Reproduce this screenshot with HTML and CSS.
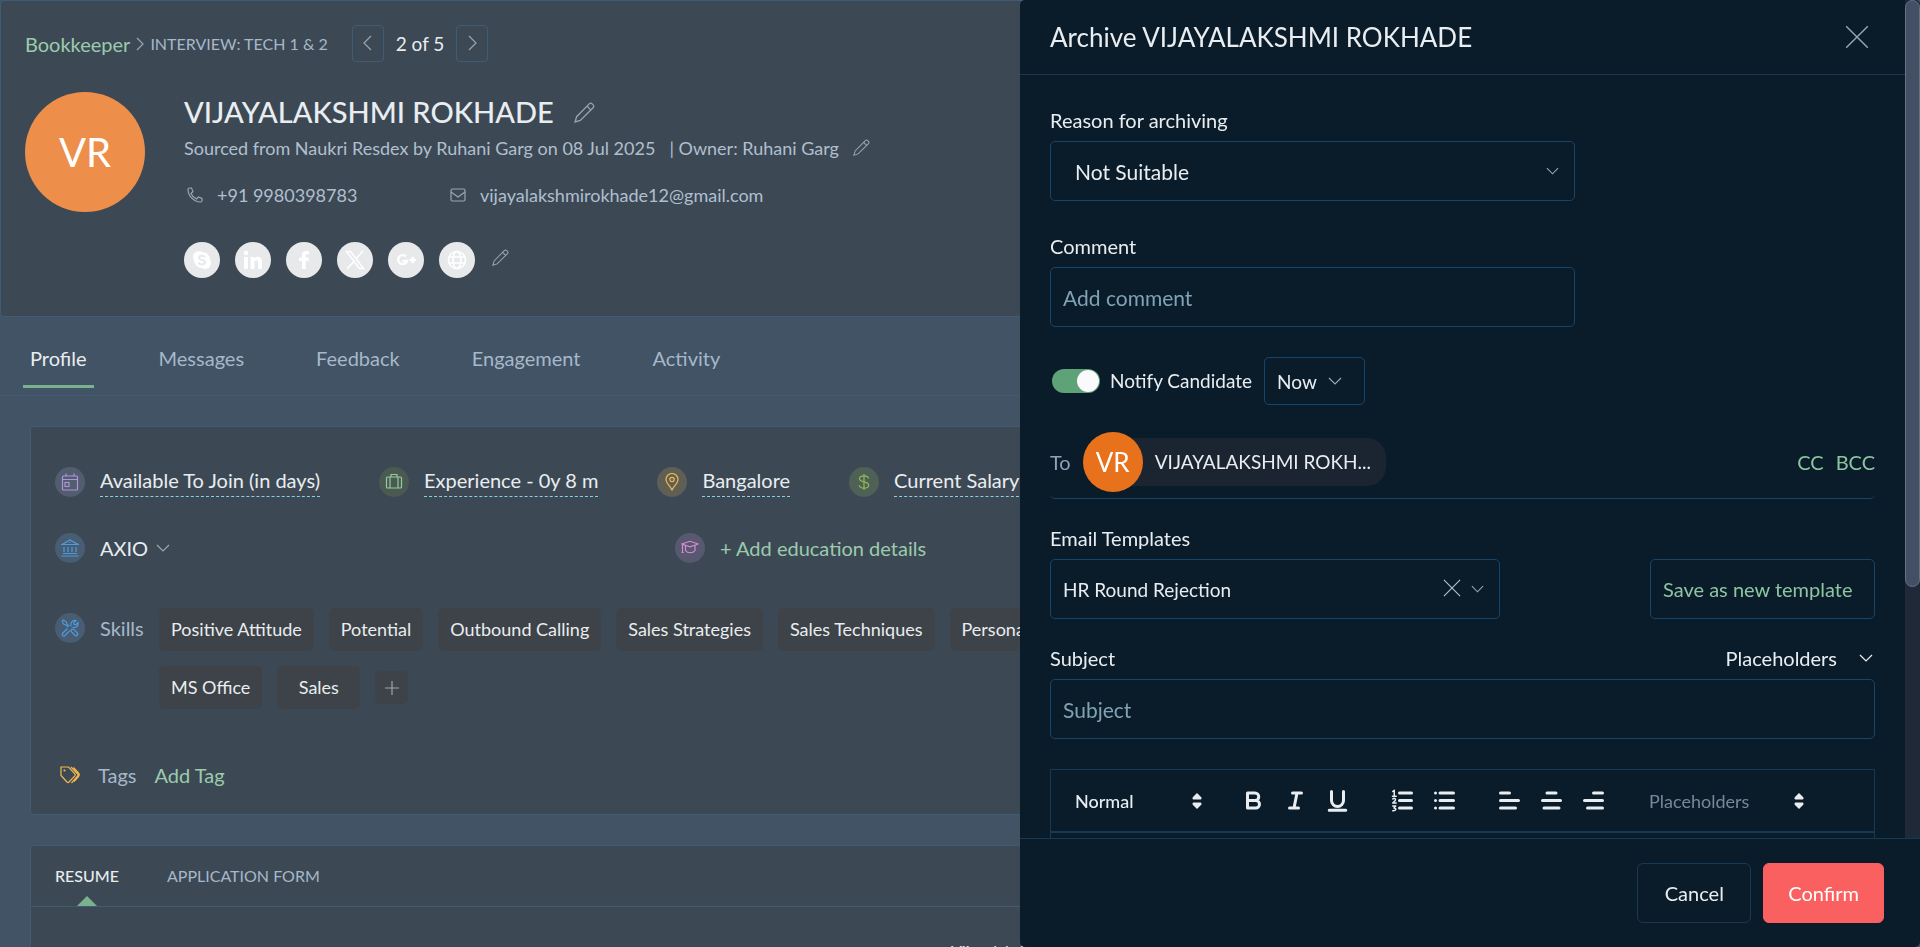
FILE: index.html
```html
<!DOCTYPE html>
<html lang="en">
<head>
  <meta charset="UTF-8">
  <meta name="viewport" content="width=device-width, initial-scale=1">
  <title>Archive candidate</title>
  <link rel="stylesheet" href="styles.css">
</head>
<body>

<!-- shared icons -->
<svg class="sprite" aria-hidden="true">
  <symbol id="pencil" viewBox="0 0 20 20">
    <path d="M1 19l1.500-5L14.500 1.800a2 2 0 0 1 2.800 0l.9.9a2 2 0 0 1 0 2.800L6 17.500zM12.500 4l3.500 3.500" />
  </symbol>
  <symbol id="down" viewBox="0 0 14 8">
    <path d="M1 1l6 6 6-6" />
  </symbol>
  <symbol id="cross" viewBox="0 0 20 20">
    <path d="M1 1l18 18M19 1L1 19" />
  </symbol>
  <symbol id="updown" viewBox="0 0 10 16">
    <path d="M5 0l4 4c1 1 .5 2.500-.5 2.500h-7C.5 6.500 0 5 1 4zM5 16l4-4c1-1 .5-2.500-.5-2.500h-7C.5 9.500 0 11 1 12z" />
  </symbol>
</svg>

<main class="page">
  <header class="candidate">
    <nav class="crumbs">
      <a href="#" class="job">Bookkeeper</a>
      <svg class="line crumb-arrow" viewBox="0 0 8 14"><path d="M1 1l6 6-6 6" /></svg>
      <span class="stage">INTERVIEW: TECH 1 &amp; 2</span>
      <button class="pager" aria-label="Previous"><svg class="line" viewBox="0 0 9 16"><path d="M8 1L1 8l7 7" /></svg></button>
      <span class="count">2 of 5</span>
      <button class="pager" aria-label="Next"><svg class="line" viewBox="0 0 9 16"><path d="M1 1l7 7-7 7" /></svg></button>
    </nav>

    <div class="person">
      <div class="avatar">VR</div>
      <div class="info">
        <h1>VIJAYALAKSHMI ROKHADE <button class="edit" aria-label="Edit name"><svg class="line pencil-lg"><use href="#pencil" /></svg></button></h1>
        <p class="source">
          <span>Sourced from Naukri Resdex by Ruhani Garg on 08 Jul 2025</span>
          <span>| Owner: Ruhani Garg</span>
          <button class="edit" aria-label="Edit owner"><svg class="line pencil"><use href="#pencil" /></svg></button>
        </p>
        <div class="contacts">
          <span class="contact phone">
            <svg class="line" viewBox="0 0 16 16"><path d="M1 2.500C1 9 7 15 13.500 15c1 0 1.500-.5 1.500-1.500v-2l-3.500-1.500-2 2C7 11 5 9 4 6.500l2-2L4.500 1h-2C1.500 1 1 1.500 1 2.500z" /></svg>
            +91 9980398783
          </span>
          <span class="contact">
            <svg class="line" viewBox="0 0 16 16"><rect x="1" y="2" width="14" height="12" rx="1.500" /><path d="M1 5l7 5 7-5" /></svg>
            vijayalakshmirokhade12@gmail.com
          </span>
        </div>
        <div class="socials">
          <a href="#" class="social" aria-label="Skype"><svg viewBox="0 0 20 20"><circle cx="7" cy="7" r="6" fill="#fff" /><circle cx="13" cy="13" r="6" fill="#fff" /><circle cx="10" cy="10" r="8" fill="#fff" /><path d="M13 7.500C12.500 5 7 5 7 7.800c0 2.700 6 1.500 6 4.400 0 3-6 2.800-6.200 0" fill="none" stroke="#e8e9eb" stroke-width="2" /></svg></a>
          <a href="#" class="social" aria-label="LinkedIn"><svg viewBox="0 0 20 20" fill="#fff"><circle cx="3" cy="3" r="2.300" /><path d="M1 7h4v12H1zM7.500 7h3.700v1.700C13.500 5.500 19 6.300 19 11.500V19h-4v-6.500c0-3-3.500-3-3.500 0V19h-4z" /></svg></a>
          <a href="#" class="social" aria-label="Facebook"><svg viewBox="0 0 20 20" fill="#fff"><path d="M8 19v-8H5V7.500h3V5.300C8 2.500 9.500 1 12 1h3v3.300h-2c-1 0-1.300.5-1.300 1.400v1.800H15l-.5 3.500h-2.800v8z" /></svg></a>
          <a href="#" class="social" aria-label="X"><svg viewBox="0 0 20 20" fill="none" stroke="#fff" stroke-width="1.500"><path d="M1.500 1.500h4l13 17h-4zM18 1l-7.200 8M9 11.500L2 19" /></svg></a>
          <a href="#" class="social" aria-label="Google Plus"><svg viewBox="0 0 20 20" fill="none" stroke="#fff" stroke-width="2.400"><path d="M10 6.500A4.500 4.500 0 1 0 11 11H6.500M13.500 10H20M16.700 6.800v6.400" /></svg></a>
          <a href="#" class="social" aria-label="Website"><svg viewBox="0 0 20 20" fill="none" stroke="#fff" stroke-width="1.700"><circle cx="10" cy="10" r="8.500" /><ellipse cx="10" cy="10" rx="4" ry="8.500" /><path d="M2 7h16M2 13h16" /></svg></a>
          <button class="edit" aria-label="Edit links"><svg class="line pencil"><use href="#pencil" /></svg></button>
        </div>
      </div>
    </div>
  </header>

  <nav class="tabs">
    <a href="#" class="tab active">Profile</a>
    <a href="#" class="tab">Messages</a>
    <a href="#" class="tab">Feedback</a>
    <a href="#" class="tab">Engagement</a>
    <a href="#" class="tab">Activity</a>
  </nav>

  <section class="card summary">
    <div class="facts">
      <div class="fact">
        <span class="badge purple"><svg viewBox="0 0 18 18"><rect x="1.500" y="3" width="15" height="14" rx="1" /><path d="M1.500 6.500h15M5 .5V3M13 .5V3" /><rect x="4" y="9.500" width="4" height="4" /></svg></span>
        <a href="#" class="editable">Available To Join (in days)</a>
      </div>
      <div class="fact">
        <span class="badge green"><svg viewBox="0 0 18 18"><rect x="1.500" y="4" width="15" height="11" rx="1" /><path d="M5 4v11M13 4v11M6 4V1.500h6V4" /></svg></span>
        <a href="#" class="editable">Experience - 0y 8 m</a>
      </div>
      <div class="fact">
        <span class="badge gold"><svg viewBox="0 0 18 18"><path d="M9 17C7 13 3 10 3 6.500a6 6 0 0 1 12 0C15 10 11 13 9 17z" /><circle cx="9" cy="6.500" r="2.200" /></svg></span>
        <a href="#" class="editable">Bangalore</a>
      </div>
      <div class="fact">
        <span class="badge lime"><svg viewBox="0 0 18 18"><path d="M9 1v16M13.500 5.500C13 2 4.500 2 4.500 5.800c0 4 9.200 2.300 9.200 6.400 0 4-9 3.800-9.400 0" /></svg></span>
        <a href="#" class="editable">Current Salary</a>
      </div>
    </div>

    <div class="history">
      <div class="fact">
        <span class="badge blue"><svg viewBox="0 0 18 18"><path d="M1 5.500L9 1l8 4.500zM3 8v5M7 8v5M11 8v5M15 8v5M2 14.500h14M.5 17h17M9 3v1" /></svg></span>
        <span class="company">AXIO</span>
        <svg class="line chevron"><use href="#down" /></svg>
      </div>
      <div class="fact">
        <span class="badge pink"><svg viewBox="0 0 18 18"><path d="M.8 5L9 2.300 17.200 5 9 7.800zM4.500 6.500v5c2 3 7.500 3 9.500 0v-5M1.500 5.500v8M.5 13.500h2.200" /></svg></span>
        <a href="#" class="add">+ Add education details</a>
      </div>
    </div>

    <div class="skills">
      <span class="badge blue"><svg viewBox="0 0 18 18"><path d="M1 2.500L2.500 1l3 2 .3 1.800 2.400 2.400M1 2.500l2 3 1.800.3 2.400 2.400M10.500 10.500c1-.7 1.800-.5 2.500.2l3.300 3.300c1.500 1.500-.8 3.800-2.300 2.300L10.700 13c-.7-.7-.9-1.500-.2-2.500zM6.500 9.500l-5 5c-1 1.500.8 3.300 2.300 2.200l5-5M10 7.500l-.2-2.700c.7-2.600 3-4 5.200-3.300l-2.300 2.300.4 1.600 1.600.4L17 3.500c.5 2.500-1 4.500-3.400 5l-2.100-.1" /></svg></span>
      <span class="skills-label">Skills</span>
      <div class="chips">
        <span class="chip">Positive Attitude</span>
        <span class="chip">Potential</span>
        <span class="chip">Outbound Calling</span>
        <span class="chip">Sales Strategies</span>
        <span class="chip">Sales Techniques</span>
        <span class="chip">Personality Development Skills</span>
        <span class="chip">MS Office</span>
        <span class="chip">Sales</span>
        <button class="add-chip" aria-label="Add skill"><svg class="line" viewBox="0 0 16 16"><path d="M8 1v14M1 8h14" /></svg></button>
      </div>
    </div>

    <div class="tags">
      <svg class="tag-icon" viewBox="0 0 20 18"><path d="M1 1h7.500l6.300 6.800c.6.700.6 1.300 0 2L9 16c-.7.700-1.300.7-2 0L1 9.500zM11 1l6.600 7c.6.600.6 1.200 0 1.800L11.500 17M13.500 1.500l5 5.500c1 1.200 1 2.300 0 3.500L14 15.500" /><circle cx="4.500" cy="4.500" r=".5" /></svg>
      <span>Tags</span>
      <a href="#" class="add">Add Tag</a>
    </div>
  </section>

  <section class="card resume">
    <nav class="doc-tabs">
      <a href="#" class="doc-tab current">RESUME</a>
      <a href="#" class="doc-tab">APPLICATION FORM</a>
    </nav>
    <div class="document">Vijayalakshmi Rokhade</div>
  </section>
</main>

<aside class="drawer">
  <div class="drawer-main">
    <div class="drawer-content">
      <header class="drawer-head">
        <h2>Archive VIJAYALAKSHMI ROKHADE</h2>
        <button class="close" aria-label="Close"><svg class="line"><use href="#cross" /></svg></button>
      </header>

      <form class="form">
        <div class="field short">
          <label for="reason">Reason for archiving</label>
          <div class="select-box">
            <select id="reason" class="control roomy"><option>Not Suitable</option></select>
            <svg class="line arrow"><use href="#down" /></svg>
          </div>
        </div>

        <div class="field short">
          <label for="comment">Comment</label>
          <input id="comment" class="control" type="text" placeholder="Add comment">
        </div>

        <div class="notify">
          <input id="notify" class="switch" type="checkbox" checked>
          <label for="notify">Notify Candidate</label>
          <div class="select-box when">
            <select class="control compact" aria-label="When to notify"><option>Now</option></select>
            <svg class="line arrow"><use href="#down" /></svg>
          </div>
        </div>

        <div class="recipients">
          <span class="to">To</span>
          <div class="recipient">
            <span class="avatar small">VR</span>
            <span class="recipient-name">VIJAYALAKSHMI ROKH...</span>
          </div>
          <a href="#" class="copy">CC</a>
          <a href="#" class="copy">BCC</a>
        </div>

        <div class="templates">
          <div class="field template">
            <label for="template">Email Templates</label>
            <div class="select-box">
              <select id="template" class="control compact"><option>HR Round Rejection</option></select>
              <button type="button" class="clear" aria-label="Clear template"><svg class="line"><use href="#cross" /></svg></button>
              <svg class="line arrow"><use href="#down" /></svg>
            </div>
          </div>
          <button type="button" class="save">Save as new template</button>
        </div>

        <div class="field">
          <div class="label-row">
            <label for="subject">Subject</label>
            <button type="button" class="insert">Placeholders <svg class="line"><use href="#down" /></svg></button>
          </div>
          <input id="subject" class="control" type="text" placeholder="Subject">
        </div>

        <div class="editor">
          <div class="toolbar">
            <button type="button" class="picker">Normal <svg><use href="#updown" /></svg></button>
            <div class="tools">
              <button type="button" class="tool" aria-label="Bold"><svg viewBox="0 0 18 18"><path d="M5 4h5a2.500 2.500 0 0 1 0 5H5zM5 9h5.500a2.500 2.500 0 0 1 0 5H5z" /></svg></button>
              <button type="button" class="tool" aria-label="Italic"><svg viewBox="0 0 18 18"><path d="M7 4h6M5 14h6M8 14l2-10" /></svg></button>
              <button type="button" class="tool" aria-label="Underline"><svg viewBox="0 0 18 18"><path d="M5 3v6a4 4 0 0 0 8 0V3M3.500 15.500h11" /></svg></button>
            </div>
            <div class="tools">
              <button type="button" class="tool" aria-label="Numbered list"><svg viewBox="0 0 18 18"><path d="M7 4h8M7 9h8M7 14h8" /><path class="thin" d="M2.500 3l1-.8v4M2.300 6.200h2.500M2.500 8c1-1 2.500 0 1.500 1.200L2.500 10.700h2.300M2.500 12.600h2L3.300 14c2 0 1.500 2-.8 1.800" /></svg></button>
              <button type="button" class="tool" aria-label="Bulleted list"><svg viewBox="0 0 18 18"><path d="M6 4h9M6 9h9M6 14h9M3 4h.01M3 9h.01M3 14h.01" /></svg></button>
            </div>
            <div class="tools">
              <button type="button" class="tool" aria-label="Align left"><svg viewBox="0 0 18 18"><path d="M3 4h6M3 9h12M3 14h10" /></svg></button>
              <button type="button" class="tool" aria-label="Align center"><svg viewBox="0 0 18 18"><path d="M6 4h6M3 9h12M4 14h10" /></svg></button>
              <button type="button" class="tool" aria-label="Align right"><svg viewBox="0 0 18 18"><path d="M9 4h6M3 9h12M5 14h10" /></svg></button>
            </div>
            <button type="button" class="picker muted">Placeholders <svg><use href="#updown" /></svg></button>
          </div>
        </div>
      </form>
    </div>
    <div class="scroll-track"><div class="scroll-thumb"></div></div>
  </div>

  <footer class="drawer-foot">
    <button class="btn">Cancel</button>
    <button class="btn confirm">Confirm</button>
  </footer>
</aside>

</body>
</html>
```

FILE: styles.css
```css
* {
  box-sizing: border-box;
}
body {
  margin: 0;
  height: 100vh;
  overflow: hidden;
  font-family: Lato, "Liberation Sans", sans-serif;
  font-size: 20px;
  line-height: 24px;
  background: #415364;
  color: #e9edf0;
}
h1, h2, p {
  margin: 0;
}
a {
  text-decoration: none;
}
button, input, select {
  font-family: inherit;
  font-size: 20px;
  color: inherit;
}
button {
  padding: 0;
  border: 0;
  background: none;
  cursor: pointer;
}
svg {
  display: block;
  flex: none;
}
.sprite {
  display: none;
}
.line {
  fill: none;
  stroke: #9aa5b0;
  stroke-width: 1.2;
}

/* candidate page */
.page {
  height: 100vh;
  overflow: hidden;
}
.candidate {
  height: 317px;
  padding: 24px;
  border: 1px solid #405c75;
  border-radius: 5px;
  background: #3c4955;
}
.crumbs {
  display: flex;
  align-items: center;
  height: 37px;
}
.job, .add {
  color: #9bcbac;
}
.crumb-arrow {
  width: 8px;
  height: 14px;
  margin: 0 6px;
}
.stage {
  font-size: 16px;
  color: #a6b8ca;
}
.pager {
  display: flex;
  justify-content: center;
  width: 32px;
  height: 37px;
  padding-top: 9px;
  margin-left: 12px;
  border: 1px solid #405c75;
  border-radius: 4px;
}
.stage + .pager {
  margin-left: 24px;
}
.pager svg {
  width: 9px;
  height: 16px;
}
.count {
  margin-left: 12px;
  font-size: 19px;
}
.person {
  display: flex;
  gap: 39px;
  margin-top: 30px;
}
.avatar {
  display: flex;
  align-items: center;
  justify-content: center;
  flex: none;
  width: 120px;
  height: 120px;
  border-radius: 50%;
  background: #ed8f4b;
  color: #fff;
  font-size: 40px;
}
.info {
  color: #b0bfce;
  font-size: 18px;
}
h1 {
  display: flex;
  align-items: center;
  gap: 20px;
  height: 40px;
  font-size: 29px;
  font-weight: 500;
  color: #e9edf0;
}
.pencil-lg {
  width: 21px;
  height: 21px;
}
.pencil {
  width: 17px;
  height: 17px;
}
.source {
  display: flex;
  align-items: center;
  height: 31px;
}
.source span {
  margin-right: 14px;
}
.contacts {
  display: flex;
  margin-top: 20px;
}
.contact {
  display: flex;
  align-items: center;
  gap: 14px;
}
.contact svg {
  width: 16px;
  height: 16px;
}
.phone {
  width: 266px;
  padding-left: 3px;
}
.socials {
  display: flex;
  align-items: center;
  gap: 15px;
  margin-top: 35px;
}
.socials .edit {
  margin: 0 0 5px 2px;
}
.social {
  display: flex;
  align-items: center;
  justify-content: center;
  width: 36px;
  height: 36px;
  border-radius: 50%;
  background: #e8e9eb;
}
.social svg {
  width: 20px;
  height: 20px;
}

.tabs {
  display: flex;
  gap: 58px;
  height: 79px;
  padding: 20px 23px 0;
  border-bottom: 1px solid #405c75;
}
.tab {
  height: 51px;
  padding: 9px 7px;
  color: #a6b8ca;
}
.tab.active {
  color: #e9edf0;
  border-bottom: 3px solid #7ab290;
}

.card {
  width: 67%;
  min-width: 1290px;
  margin: 30px 0 0 30px;
  border: 1px solid #405c75;
  border-radius: 4px;
  background: #3c4955;
}
.summary {
  height: 389px;
  padding: 40px 24px;
}
.facts {
  display: flex;
  gap: 59px;
}
.fact {
  display: flex;
  align-items: center;
  gap: 15px;
  height: 30px;
}
.badge {
  display: flex;
  align-items: center;
  justify-content: center;
  flex: none;
  width: 30px;
  height: 30px;
  border-radius: 50%;
}
.badge svg {
  width: 18px;
  height: 18px;
  fill: none;
  stroke: currentColor;
  stroke-width: 1.2;
}
.purple {
  background: #525d70;
  color: #ac96d8;
}
.green {
  background: #4a5a50;
  color: #94c9a4;
}
.gold {
  background: #605f55;
  color: #f2b84b;
}
.lime {
  background: #4f6056;
  color: #8fbc4f;
}
.blue {
  background: #485d72;
  color: #4f9be0;
}
.pink {
  background: #585970;
  color: #d68bd2;
}
.editable {
  padding-bottom: 3px;
  border-bottom: 1px dashed #8ccfdc;
  line-height: 26px;
  color: #e9edf0;
}
.history {
  display: grid;
  grid-template-columns: 1fr 1fr;
  margin-top: 36px;
}
.chevron {
  width: 14px;
  height: 8px;
  margin-left: -7px;
}
.skills {
  display: flex;
  margin-top: 45px;
}
.skills .badge {
  margin-top: 5px;
}
.skills-label {
  flex: none;
  width: 59px;
  margin: 8px 0 0 15px;
  color: #a6b8ca;
}
.chips {
  display: flex;
  flex-wrap: wrap;
  align-items: center;
  gap: 15px;
}
.chip {
  min-width: 83px;
  padding: 9px 12px 10px;
  border-radius: 5px;
  background: #3d4348;
  font-size: 18px;
  text-align: center;
}
.add-chip {
  display: flex;
  align-items: center;
  justify-content: center;
  width: 33px;
  height: 33px;
  border-radius: 5px;
  background: #3d4348;
}
.add-chip svg {
  width: 16px;
  height: 16px;
}
.tags {
  display: flex;
  align-items: center;
  gap: 18px;
  margin-top: 54px;
  padding-left: 5px;
  color: #a6b8ca;
}
.tag-icon {
  width: 20px;
  height: 18px;
  fill: none;
  stroke: #f2b84b;
  stroke-width: 1.2;
}
.doc-tabs {
  display: flex;
  gap: 48px;
  height: 61px;
  padding: 0 24px;
  border-bottom: 1px solid #405c75;
  font-size: 16px;
}
.doc-tab {
  display: flex;
  flex-direction: column;
  padding-top: 18px;
  color: #a6b8ca;
}
.doc-tab.current {
  font-weight: 500;
  color: #e9edf0;
}
.doc-tab.current::after {
  content: "";
  align-self: center;
  margin-top: auto;
  border: 10px solid transparent;
  border-top-width: 0;
  border-bottom-color: #7ab290;
}
.document {
  height: 400px;
  padding: 32px 0 0 920px;
  font-size: 16px;
}

/* archive drawer */
.drawer {
  position: fixed;
  top: 0;
  right: 0;
  display: flex;
  flex-direction: column;
  width: 46.875%;
  height: 100vh;
  overflow: hidden;
  border-radius: 5px;
  background: #0a1c2a;
}
.drawer-main {
  display: flex;
  flex: 1;
  min-height: 0;
}
.drawer-content {
  flex: 1;
  min-width: 0;
  overflow: hidden;
}
.scroll-track {
  width: 15px;
  background: #1f2937;
}
.scroll-thumb {
  height: 70%;
  border: 1px solid #687083;
  border-radius: 8px;
  background: #434f64;
}
.drawer-head {
  display: flex;
  align-items: center;
  justify-content: space-between;
  height: 75px;
  padding: 0 36px 0 30px;
  border-bottom: 1px solid #163a54;
}
h2 {
  font-size: 26px;
  font-weight: 400;
}
.close svg {
  width: 24px;
  height: 24px;
}
.form {
  padding: 33px 30px 0;
}
.field {
  display: flex;
  flex-direction: column;
  gap: 9px;
}
.short {
  width: 525px;
  max-width: 100%;
  margin-bottom: 33px;
}
.control {
  width: 100%;
  height: 60px;
  padding: 0 12px;
  border: 1px solid #17456a;
  border-radius: 5px;
  background: transparent;
  font-size: 21px;
  appearance: none;
}
.control::placeholder {
  color: #7fa3b4;
  opacity: 1;
}
.roomy {
  padding-left: 24px;
}
.compact {
  font-size: 19px;
}
option {
  background: #0a1c2a;
}
.select-box {
  position: relative;
}
/* icons drawn over the native select */
.arrow {
  position: absolute;
  top: 50%;
  right: 16px;
  width: 13px;
  height: 8px;
  margin-top: -4px;
  pointer-events: none;
}
.clear {
  position: absolute;
  top: 20px;
  right: 39px;
}
.clear svg {
  width: 18px;
  height: 18px;
}
.clear .line {
  stroke: #b4c4d2;
}
.notify {
  display: flex;
  align-items: center;
  margin-top: -3px;
  font-size: 19px;
}
.switch {
  width: 48px;
  height: 24px;
  margin: 0 10px 0 2px;
  border-radius: 12px;
  background: #5ea277;
  appearance: none;
}
.switch::before {
  content: "";
  display: block;
  width: 22px;
  height: 22px;
  margin: 1px;
  border-radius: 50%;
  background: #fafafc;
}
.switch:checked::before {
  margin-left: 25px;
}
.when {
  width: 101px;
  margin-left: 12px;
}
.when .control {
  height: 48px;
}
.when .arrow {
  right: 22px;
  width: 16px;
}
.recipients {
  display: flex;
  align-items: center;
  gap: 12px;
  height: 72px;
  margin-top: 22px;
  padding-bottom: 2px;
  border-bottom: 1px solid #17456a;
  border-radius: 5px;
}
.to {
  color: #8ca3b8;
}
.recipient {
  display: flex;
  align-items: center;
  height: 48px;
  margin-right: auto;
  padding-right: 15px;
  border-radius: 30px 24px 24px 30px;
  background: #1b2431;
  font-size: 19px;
}
.avatar.small {
  width: 60px;
  height: 60px;
  margin-right: 12px;
  background: #e8711b;
  font-size: 26px;
}
.copy {
  color: #8cc5a0;
}
.templates {
  display: flex;
  align-items: flex-end;
  justify-content: space-between;
  margin: 27px 0;
}
.template {
  width: 450px;
}
.save {
  width: 225px;
  height: 60px;
  padding-left: 12px;
  border: 1px solid #17456a;
  border-radius: 5px;
  text-align: left;
  color: #8cc5a0;
}
.label-row {
  display: flex;
  justify-content: space-between;
}
.insert {
  display: flex;
  align-items: center;
  gap: 22px;
  padding-right: 2px;
}
.insert svg {
  width: 14px;
  height: 8px;
}
.insert .line {
  stroke: #e9edf0;
}
.editor {
  height: 300px;
  margin-top: 30px;
  border: 1px solid #163a54;
}
.toolbar {
  display: flex;
  align-items: center;
  gap: 38px;
  height: 63px;
  padding: 0 24px;
  border-bottom: 2px solid #163a54;
}
.picker {
  display: flex;
  align-items: center;
  justify-content: space-between;
  width: 127px;
  font-size: 18px;
  font-weight: 500;
}
.picker svg {
  width: 10px;
  height: 16px;
  fill: #e9edf0;
}
.muted {
  width: 155px;
  margin-left: 4px;
  font-weight: 400;
  color: #77889a;
}
.tools {
  display: flex;
  gap: 15px;
}
.tool svg {
  width: 27px;
  height: 27px;
  fill: none;
  stroke: #e9edf0;
  stroke-width: 2;
  stroke-linecap: round;
  stroke-linejoin: round;
}
.tool .thin {
  stroke-width: 1;
}
.drawer-foot {
  display: flex;
  justify-content: flex-end;
  gap: 12px;
  height: 109px;
  padding: 24px 36px;
  border-top: 1px solid #163a54;
}
.btn {
  min-width: 114px;
  height: 60px;
  padding: 0 24px;
  border: 1px solid #163a54;
  border-radius: 6px;
}
.confirm {
  border-color: #fa6060;
  background: #fa6060;
  color: #fff;
}
```
